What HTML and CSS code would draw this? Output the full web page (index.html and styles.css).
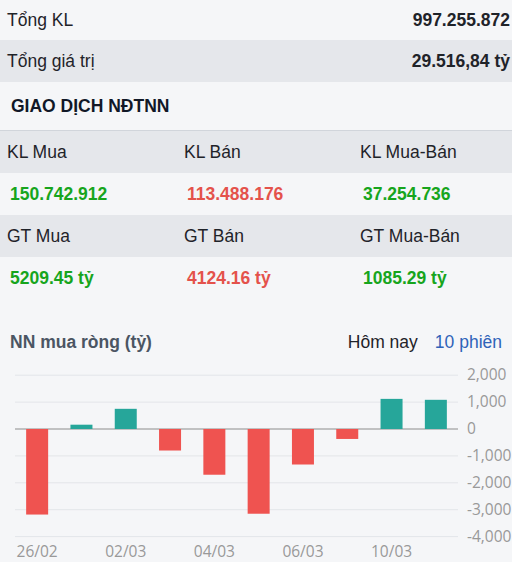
FILE: index.html
```html
<!DOCTYPE html>
<html lang="vi">
<head>
    <meta charset="UTF-8">
    <meta name="viewport" content="width=device-width, initial-scale=1.0">
    <title>Giao dịch NĐTNN</title>
    <link rel="stylesheet" href="styles.css">
</head>
<body>

<div class="summary">
    <div class="summary-row">
        <span>Tổng KL</span>
        <span class="summary-value">997.255.872</span>
    </div>
    <div class="summary-row alt">
        <span>Tổng giá trị</span>
        <span class="summary-value">29.516,84 tỷ</span>
    </div>
</div>

<h3 class="section-title">GIAO DỊCH NĐTNN</h3>

<div class="foreign-grid">
    <div class="grid-head">KL Mua</div>
    <div class="grid-head">KL Bán</div>
    <div class="grid-head">KL Mua-Bán</div>
    <div class="grid-val up">150.742.912</div>
    <div class="grid-val down">113.488.176</div>
    <div class="grid-val up">37.254.736</div>

    <div class="grid-head">GT Mua</div>
    <div class="grid-head">GT Bán</div>
    <div class="grid-head">GT Mua-Bán</div>
    <div class="grid-val up">5209.45 tỷ</div>
    <div class="grid-val down">4124.16 tỷ</div>
    <div class="grid-val up">1085.29 tỷ</div>
</div>

<div class="chart-head">
    <span class="chart-title">NN mua ròng (tỷ)</span>
    <div class="chart-tabs">
        <span class="tab">Hôm nay</span>
        <span class="tab active">10 phiên</span>
    </div>
</div>

<svg id="netChart" class="chart" width="512" height="208"></svg>

<script>
    // Giá trị mua ròng 10 phiên (tỷ)
    const sessions = [
        { day: '26/02', value: -3180 },
        { day: '27/02', value: 160 },
        { day: '02/03', value: 750 },
        { day: '03/03', value: -800 },
        { day: '04/03', value: -1700 },
        { day: '05/03', value: -3150 },
        { day: '06/03', value: -1320 },
        { day: '09/03', value: -370 },
        { day: '10/03', value: 1120 },
        { day: '11/03', value: 1085 }
    ];
    const labelDays = ['26/02', '02/03', '04/03', '06/03', '10/03'];

    const NS = 'http://www.w3.org/2000/svg';
    const svg = document.getElementById('netChart');
    const left = 15, right = 458, zeroY = 75, step = 26.9; // px cho 1.000 tỷ
    const slot = (right - left) / sessions.length;

    function el(tag, attrs, text) {
        const node = document.createElementNS(NS, tag);
        for (const k in attrs) node.setAttribute(k, attrs[k]);
        if (text) node.textContent = text;
        svg.appendChild(node);
        return node;
    }

    // lưới ngang + nhãn trục
    for (let v = 2000; v >= -4000; v -= 1000) {
        const y = zeroY - v / 1000 * step;
        el('line', { x1: left, x2: right, y1: y, y2: y, class: v === 0 ? 'zero' : 'grid' });
        el('text', { x: 467, y: y + 5, class: 'axis' }, v.toLocaleString('en-US'));
    }

    sessions.forEach((s, i) => {
        const cx = left + slot * i + slot / 2;
        const h = Math.abs(s.value) / 1000 * step;
        el('rect', {
            x: cx - 11, width: 22,
            y: s.value >= 0 ? zeroY - h : zeroY,
            height: h,
            class: s.value >= 0 ? 'bar-up' : 'bar-down'
        });
        if (labelDays.includes(s.day)) {
            el('text', { x: cx, y: 203, class: 'axis', 'text-anchor': 'middle' }, s.day);
        }
    });
</script>

</body>
</html>
```

FILE: styles.css
```css
body {
    margin: 0;
    font-family: "Liberation Sans", Arial, sans-serif;
    background-color: #f5f6f8;
    color: #1f2329;
    width: 512px;
    height: 562px;
    overflow: hidden;
}
.summary-row {
    display: flex;
    justify-content: space-between;
    align-items: center;
    height: 40px;
    padding: 0 2px 0 7px;
    font-size: 17.5px;
}
.summary-row.alt {
    height: 42px;
    background-color: #e5e7eb;
}
.summary-value {
    font-weight: bold;
}
.section-title {
    margin: 0;
    height: 48px;
    line-height: 48px;
    padding-left: 11px;
    font-size: 17.5px;
    color: #111827;
    border-bottom: 1px solid #d1d5db;
}
.foreign-grid {
    display: grid;
    grid-template-columns: 177px 176px 1fr;
    grid-auto-rows: 42px;
}
.grid-head {
    background-color: #e5e7eb;
    padding-left: 7px;
    line-height: 42px;
    font-size: 17.5px;
}
.grid-val {
    padding-left: 10px;
    line-height: 42px;
    font-size: 17.5px;
    font-weight: bold;
}
.up {
    color: #17a51d;
}
.down {
    color: #e4524b;
}
.chart-head {
    display: flex;
    justify-content: space-between;
    align-items: center;
    height: 24px;
    padding: 31px 10px 0 10px;
}
.chart-title {
    font-size: 17.5px;
    font-weight: bold;
    color: #4b5563;
}
.chart-tabs {
    display: flex;
    gap: 17px;
    font-size: 17.5px;
}
.tab.active {
    color: #2f63b9;
}
.chart {
    display: block;
}
.chart .grid {
    stroke: #e3e5e9;
    stroke-width: 1;
}
.chart .zero {
    stroke: #8c8c8c;
    stroke-width: 1;
}
.chart .axis {
    font-family: "Open Sans", "Noto Sans", sans-serif;
    font-size: 15.5px;
    fill: #999;
}
.bar-up {
    fill: #26a69a;
}
.bar-down {
    fill: #ef5350;
}
```
